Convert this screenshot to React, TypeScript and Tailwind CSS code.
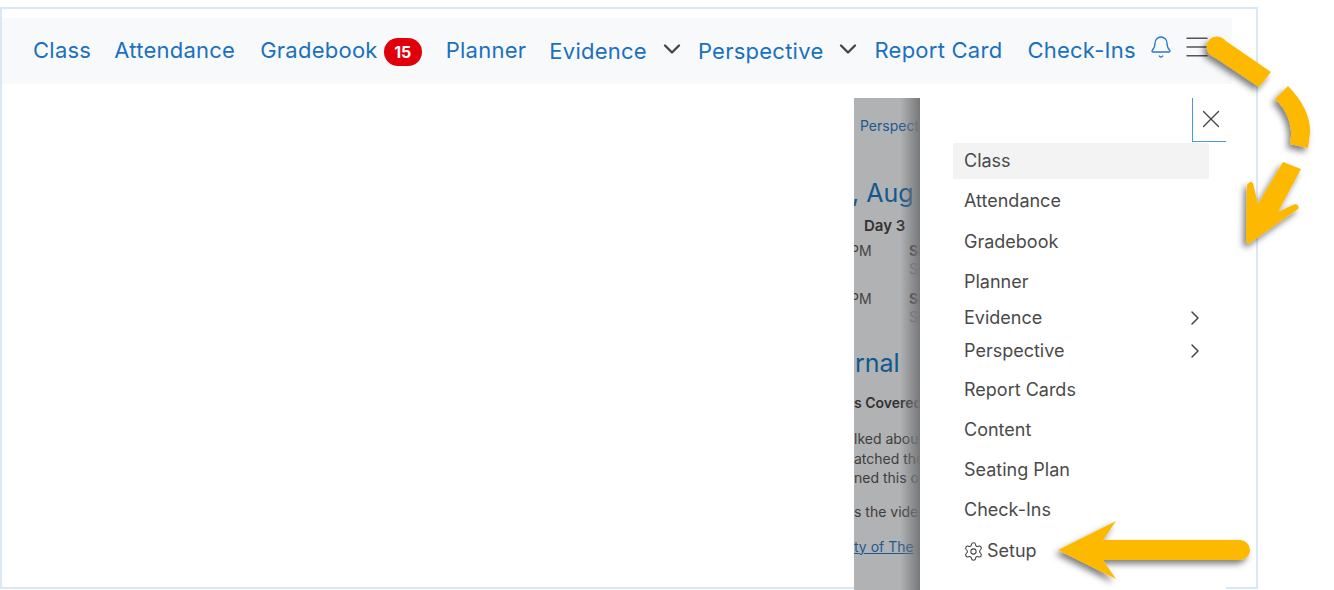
import { Bell, ChevronDown, ChevronRight, Menu, Settings, X } from "lucide-react";

const navLink = "text-[#1a71bd] text-[22px] leading-[30px] tracking-[0.25px] whitespace-nowrap";
const menuItem = "pl-[11px] text-[#4a4a4a] text-[18px] leading-[24px]";

const Arrows = () => (
  <svg className="absolute left-0 top-0 pointer-events-none" width="1334" height="590" viewBox="0 0 1334 590" fill="none">
    <defs>
      <filter id="arrow-shadow" x="-30%" y="-30%" width="160%" height="160%">
        <feDropShadow dx="-3" dy="4" stdDeviation="3" floodColor="#000" floodOpacity="0.5" />
      </filter>
    </defs>
    <g filter="url(#arrow-shadow)" fill="#fdb900">
      <path d="M1222.6 38.7 L1271 72 L1259 87 L1211.4 55.3 Z" />
      <circle cx="1217" cy="47" r="10.5" />
      <path d="M1288 86 C1302 100 1311 117 1310 133 L1308 148 L1290 144 C1294 128 1288 111 1275 99 Z" />
      <path d="M1283 162 L1301 169 L1278 212 L1295 204 Q1300 205 1298 209 L1250 243 Q1246 244 1246 240 L1247 185 Q1250 180 1253 183 L1258 204 Z" />
      <path d="M1058 550 L1116 521 L1103 540 L1240 540 A10 10 0 0 1 1240 560 L1103 560 L1116 579 Z" />
    </g>
  </svg>
);

const Backdrop = () => (
  <div className="w-[66px] h-[493px] bg-[#b1b2b3] overflow-hidden flex flex-col items-stretch relative font-['Inter',sans-serif]">
    <div className="absolute right-0 top-0 h-full w-[20px] bg-gradient-to-r from-transparent to-[#77787a]" />
    <p className="pl-[6px] pt-[19px] text-[14px] leading-[18px] text-[#1d5a8f] whitespace-nowrap">Perspective</p>
    <p className="-ml-[2px] mt-[43px] text-[25px] leading-[30px] text-[#10588f] whitespace-nowrap">, Aug 30</p>
    <p className="pl-[10px] mt-[8px] text-[15px] leading-[20px] font-semibold text-[#333] whitespace-nowrap">Day 3</p>
    <div className="mt-[6px] flex text-[14px] leading-[18px] text-[#444]">
      <span className="-ml-[4px] w-[59px] shrink-0">PM</span>
      <div className="flex flex-col">
        <span className="font-bold text-[#333]">Sc</span>
        <span className="text-[#777]">Sl</span>
      </div>
    </div>
    <div className="mt-[12px] flex text-[14px] leading-[18px] text-[#444]">
      <span className="-ml-[4px] w-[59px] shrink-0">PM</span>
      <div className="flex flex-col">
        <span className="font-bold text-[#333]">Sc</span>
        <span className="text-[#777]">Sc</span>
      </div>
    </div>
    <p className="mt-[21px] pl-[1px] text-[25px] leading-[32px] text-[#10588f] whitespace-nowrap">rnal</p>
    <p className="mt-[15px] text-[14px] leading-[18px] font-semibold text-[#333] whitespace-nowrap">s Covered</p>
    <div className="mt-[17px] text-[14px] leading-[19.5px] text-[#3d3d3d] whitespace-nowrap">
      <p>lked about</p>
      <p>atched the</p>
      <p>ned this of</p>
    </div>
    <p className="mt-[14px] text-[14px] leading-[19px] text-[#3d3d3d] whitespace-nowrap">s the video</p>
    <p className="mt-[16px] text-[14px] leading-[19px] text-[#1d5a8f] underline whitespace-nowrap">ty of The</p>
  </div>
);

const SideMenu = () => (
  <div className="w-[306px] h-[493px] bg-white flex flex-col font-['Inter',sans-serif]">
    <div className="flex justify-end h-[44px]">
      <div className="w-[34px] h-[44px] border-l border-b border-[#4d94ef] flex items-center justify-center">
        <X size={30} strokeWidth={1.1} className="text-[#444] ml-[2px] -mt-[2px]" />
      </div>
    </div>
    <div className="flex flex-col ml-[33px] w-[256px] mt-[1px]">
      <div className={`${menuItem} h-[36px] flex items-center bg-[#f3f3f3] rounded-[2px]`}>Class</div>
      <div className={`${menuItem} mt-[10px]`}>Attendance</div>
      <div className={`${menuItem} mt-[17px]`}>Gradebook</div>
      <div className={`${menuItem} mt-[16px]`}>Planner</div>
      <div className={`${menuItem} mt-[12px] h-[24px] flex items-center justify-between`}>
        Evidence
        <ChevronRight size={24} strokeWidth={1.5} className="text-[#444] mr-[2px]" />
      </div>
      <div className={`${menuItem} mt-[9px] h-[24px] flex items-center justify-between`}>
        Perspective
        <ChevronRight size={24} strokeWidth={1.5} className="text-[#444] mr-[2px]" />
      </div>
      <div className={`${menuItem} mt-[15px]`}>Report Cards</div>
      <div className={`${menuItem} mt-[16px]`}>Content</div>
      <div className={`${menuItem} mt-[16px]`}>Seating Plan</div>
      <div className={`${menuItem} mt-[16px]`}>Check-Ins</div>
      <div className={`${menuItem} mt-[17px] flex items-center gap-[3px] -ml-[1px]`}>
        <Settings size={21} strokeWidth={1.2} className="text-[#444]" />
        Setup
      </div>
    </div>
  </div>
);

const App = () => {
  return (
    <div className="relative w-[1334px] h-[590px] bg-white overflow-hidden pt-[7px] font-['Inter',sans-serif]">
      <div className="w-[1258px] h-[582px] border-2 border-[#d9e8f5] pt-[9px] flex flex-col">
        <div className="w-[1230px] h-[66px] shrink-0 bg-[#f8f9fb] flex items-center pl-[31px] pb-[2px]">
          <span className={navLink}>Class</span>
          <span className={`${navLink} ml-[23px]`}>Attendance</span>
          <span className={`${navLink} ml-[25px]`}>Gradebook</span>
          <span className="ml-[6px] w-[38px] h-[28px] rounded-[14px] bg-[#e0000b] text-white text-[16px] font-bold flex items-center justify-center mt-[3px]">15</span>
          <span className={`${navLink} ml-[24px]`}>Planner</span>
          <span className={`${navLink} ml-[23px] mt-[2px]`}>Evidence</span>
          <ChevronDown size={28} strokeWidth={2} className="text-[#444] ml-[11px] -mt-[2px]" />
          <span className={`${navLink} ml-[12px] mt-[2px]`}>Perspective</span>
          <ChevronDown size={28} strokeWidth={2} className="text-[#444] ml-[11px] -mt-[2px]" />
          <span className={`${navLink} ml-[12px]`}>Report Card</span>
          <span className={`${navLink} ml-[25px]`}>Check-Ins</span>
          <Bell size={24} strokeWidth={1.3} className="text-[#2a78c4] ml-[13px] -mt-[6px]" />
          <Menu size={30} strokeWidth={1.1} className="text-[#555] ml-[9px] -mt-[6px]" />
        </div>
        <div className="flex justify-end w-[1230px] mt-[14px] pr-[6px]">
          <Backdrop />
          <SideMenu />
        </div>
      </div>
      <Arrows />
    </div>
  );
};

export default App;
